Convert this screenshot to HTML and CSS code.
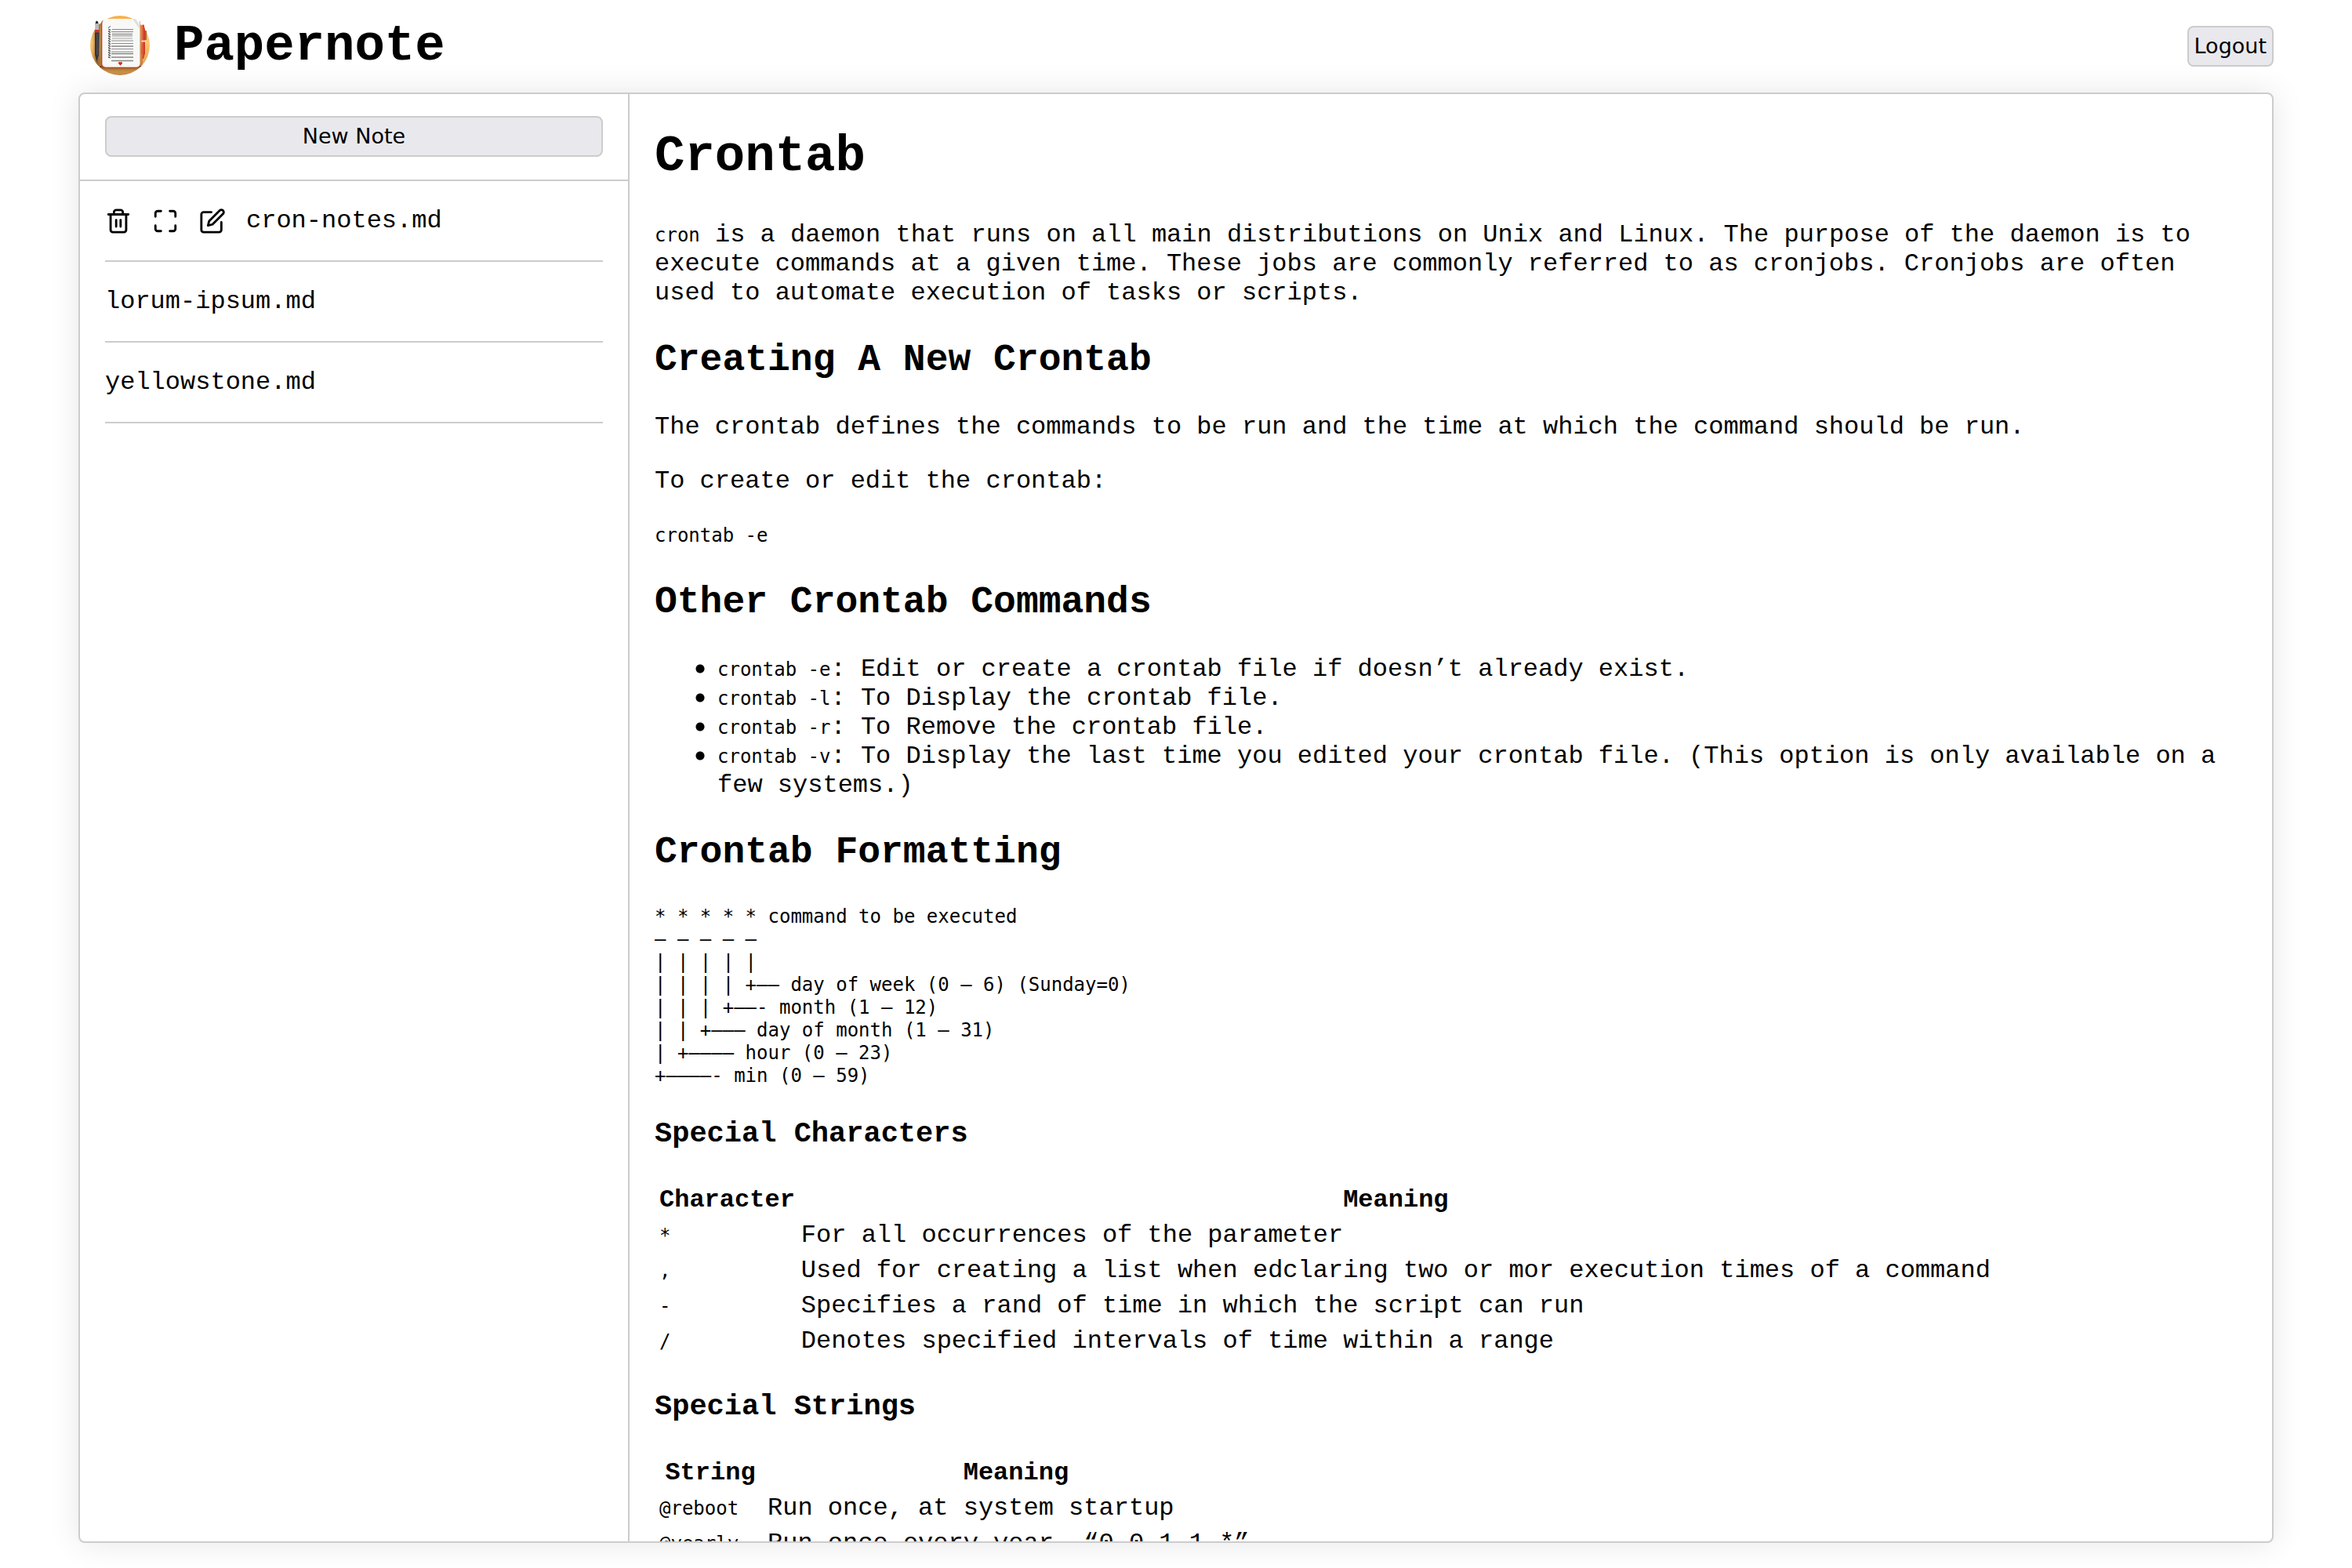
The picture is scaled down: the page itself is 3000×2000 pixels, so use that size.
FILE: index.html
```html
<!DOCTYPE html>
<html lang="en">
<head>
<meta charset="utf-8">
<meta name="viewport" content="width=device-width, initial-scale=1">
<title>Papernote</title>
<link rel="stylesheet" href="styles.css">
</head>
<body>
<header class="topbar">
  <svg class="logo" viewBox="0 0 76 76" aria-hidden="true">
    <defs>
      <linearGradient id="desk" x1="0" y1="0" x2="0" y2="1">
        <stop offset="0" stop-color="#f7b04a"/>
        <stop offset="0.45" stop-color="#fbc673"/>
        <stop offset="0.85" stop-color="#e2a24c"/>
        <stop offset="1" stop-color="#c08a45"/>
      </linearGradient>
      <linearGradient id="shade" x1="0" y1="0" x2="1" y2="0">
        <stop offset="0" stop-color="#8a5a2a" stop-opacity="0"/>
        <stop offset="0.5" stop-color="#6b4020" stop-opacity="0.7"/>
        <stop offset="1" stop-color="#6b4020" stop-opacity="0.3"/>
      </linearGradient>
      <linearGradient id="under" x1="0" y1="0" x2="0" y2="1">
        <stop offset="0" stop-color="#6b3d18"/>
        <stop offset="1" stop-color="#9a6a30" stop-opacity="0"/>
      </linearGradient>
      <linearGradient id="curl" x1="0" y1="1" x2="1" y2="0">
        <stop offset="0.4" stop-color="#fff"/>
        <stop offset="0.6" stop-color="#d8d8d8"/>
        <stop offset="0.8" stop-color="#fff"/>
      </linearGradient>
      <clipPath id="disc"><circle cx="38" cy="38" r="38"/></clipPath>
    </defs>
    <g clip-path="url(#disc)">
      <rect width="76" height="76" fill="url(#desk)"/>
      <rect x="2" y="10" width="14" height="54" fill="url(#shade)"/>
      <rect x="63" y="12" width="4" height="54" fill="#b4702f" opacity="0.6"/>
      <rect x="12" y="64" width="55" height="8" fill="url(#under)"/>
    </g>
    <rect x="14" y="5" width="50" height="62" rx="5" fill="#b8432f"/>
    <rect x="15" y="5" width="49" height="61" rx="5" fill="#e9b5a8"/>
    <rect x="16" y="4" width="47" height="61" rx="4" fill="#f8f8f7"/>
    <path d="M54 4h8l1 13-6-4z" fill="url(#curl)"/>
    <path d="M8 6.500l2 1 .8 4H6.500l.6-4z" fill="#2d2d33"/>
    <path d="M6.500 10h4.500v9h-5z" fill="#b9bac2"/>
    <path d="M6 18h5.500v3.500H6z" fill="#d5301f"/>
    <path d="M6 21.500h5.500L11 50l-2.500 9L6 50z" fill="#34343c"/>
    <path d="M9 23v27" stroke="#62636d" stroke-width="1"/>
    <path d="M66.500 11.500h2L70 18v30l-2 7h-1l-1.500-7z" fill="#cf3a20"/>
    <path d="M67 14v38" stroke="#f07b55" stroke-width="1"/>
    <path d="M65.500 32.500h5.500" stroke="#f5e3d8" stroke-width="2"/>
    <path d="M71 19v12" stroke="#8a4a24" stroke-width="1.500"/>
    <rect x="28" y="22" width="26" height="5" fill="#c9c9c9"/>
    <path d="M28 17.500h27M27 20.500h28M27 32h28M27 35.500h28M27 42.500h28M27 46h28" stroke="#8b8b8b" stroke-width="1"/>
    <path d="M28 24h26M28 29h26" stroke="#a5a5a5" stroke-width="1"/>
    <path d="M27 39h28M27 48.500h28M27 53h28M27 57.500h28" stroke="#858886" stroke-width="1.500"/>
    <path d="M23 15.500l3-2M23 17l3 1-3 2 3 1-3 2 3 1-3 2 3 1-3 2 3 1-3 2 3 1-3 2 3 1-3 2 3 1-3 2 3 1-3 2 3 1-3 2 3 1-3 2 3 1-3 2 3 1" fill="none" stroke="#555" stroke-width="1"/>
    <path d="M38.500 63.500l-2.500-2.500a1.500 1.500 0 0 1 2.500-1.500 1.500 1.500 0 0 1 2.500 1.500z" fill="#d42a12"/>
  </svg>
  <h1 class="brand">Papernote</h1>
  <button class="btn logout" type="button">Logout</button>
</header>

<div class="panel">
  <nav class="sidebar" aria-label="Notes">
    <div class="actions">
      <button class="btn new-note" type="button">New Note</button>
    </div>
    <ul class="notes">
      <li class="note">
        <button class="tool" type="button" aria-label="Delete">
          <svg class="icon" viewBox="0 0 24 24"><path d="M3 6h18M19 6v14a2 2 0 0 1-2 2H7a2 2 0 0 1-2-2V6m3 0V4a2 2 0 0 1 2-2h4a2 2 0 0 1 2 2v2M10 11v6M14 11v6"/></svg>
        </button>
        <button class="tool" type="button" aria-label="Full screen">
          <svg class="icon" viewBox="0 0 24 24"><path d="M8 3H5a2 2 0 0 0-2 2v3m18 0V5a2 2 0 0 0-2-2h-3m0 18h3a2 2 0 0 0 2-2v-3M3 16v3a2 2 0 0 0 2 2h3"/></svg>
        </button>
        <button class="tool" type="button" aria-label="Edit">
          <svg class="icon" viewBox="0 0 24 24"><path d="M11 4H4a2 2 0 0 0-2 2v14a2 2 0 0 0 2 2h14a2 2 0 0 0 2-2v-7"/><path d="M18.500 2.500a2.121 2.121 0 0 1 3 3L12 15l-4 1 1-4 9.500-9.500z"/></svg>
        </button>
        <a class="note-link" href="#cron-notes">cron-notes.md</a>
      </li>
      <li class="note"><a class="note-link" href="#lorum-ipsum">lorum-ipsum.md</a></li>
      <li class="note"><a class="note-link" href="#yellowstone">yellowstone.md</a></li>
    </ul>
  </nav>

  <main class="document">
    <h1>Crontab</h1>
    <p><code>cron</code> is a daemon that runs on all main distributions on Unix and Linux. The purpose of the daemon is to execute commands at a given time. These jobs are commonly referred to as cronjobs. Cronjobs are often used to automate execution of tasks or scripts.</p>
    <h2>Creating A New Crontab</h2>
    <p>The crontab defines the commands to be run and the time at which the command should be run.</p>
    <p>To create or edit the crontab:</p>
    <p><code>crontab -e</code></p>
    <h2>Other Crontab Commands</h2>
    <ul>
      <li><code>crontab -e</code>: Edit or create a crontab file if doesn’t already exist.</li>
      <li><code>crontab -l</code>: To Display the crontab file.</li>
      <li><code>crontab -r</code>: To Remove the crontab file.</li>
      <li><code>crontab -v</code>: To Display the last time you edited your crontab file. (This option is only available on a few systems.)</li>
    </ul>
    <h2>Crontab Formatting</h2>
<pre><code>* * * * * command to be executed
— — — — —
| | | | |
| | | | +—— day of week (0 — 6) (Sunday=0)
| | | +——- month (1 — 12)
| | +——— day of month (1 — 31)
| +———— hour (0 — 23)
+————- min (0 — 59)
</code></pre>
    <h3>Special Characters</h3>
    <table>
      <thead><tr><th>Character</th><th>Meaning</th></tr></thead>
      <tbody>
        <tr><td><code>*</code></td><td>For all occurrences of the parameter</td></tr>
        <tr><td><code>,</code></td><td>Used for creating a list when edclaring two or mor execution times of a command</td></tr>
        <tr><td><code>-</code></td><td>Specifies a rand of time in which the script can run</td></tr>
        <tr><td><code>/</code></td><td>Denotes specified intervals of time within a range</td></tr>
      </tbody>
    </table>
    <h3>Special Strings</h3>
    <table>
      <thead><tr><th>String</th><th>Meaning</th></tr></thead>
      <tbody>
        <tr><td><code>@reboot</code></td><td>Run once, at system startup</td></tr>
        <tr><td><code>@yearly</code></td><td>Run once every year, “0 0 1 1 *”</td></tr>
        <tr><td><code>@annually</code></td><td>(same as @yearly)</td></tr>
        <tr><td><code>@monthly</code></td><td>Run once every month, “0 0 1 * *”</td></tr>
      </tbody>
    </table>
  </main>
</div>
</body>
</html>
```
FILE: styles.css
```css
body {
  display: flex;
  flex-direction: column;
  box-sizing: border-box;
  height: 100vh;
  margin: 0;
  padding: 0 100px 32px;
  background: #fff;
  color: #000;
  font-family: "Liberation Mono", "Courier New", monospace;
  font-size: 32px;
}

.topbar {
  display: flex;
  flex: none;
  align-items: center;
  height: 118px;
}

.logo {
  width: 76px;
  height: 76px;
  margin: 0 0 2px 15px;
}

.brand {
  margin: 0 auto 0 31px;
  font-size: 64px;
  font-weight: bold;
}

.btn {
  box-sizing: border-box;
  height: 52px;
  padding: 0 7px 2px;
  border: 2px solid #ccc;
  border-radius: 8px;
  background: #e9e9ed;
  color: #000;
  font-family: "DejaVu Sans", sans-serif;
  font-size: 27px;
}

.panel {
  display: flex;
  flex: 1;
  min-height: 0;
  border: 2px solid #ccc;
  border-radius: 8px;
  background: #fff;
  box-shadow: 0 0 40px rgba(0, 0, 0, 0.1);
}

.sidebar {
  flex: 0 0 25%;
  border-right: 2px solid #ccc;
}

.actions {
  padding: 28px 32px 29px;
  border-bottom: 2px solid #ccc;
}

.new-note {
  display: block;
  width: 100%;
}

.notes {
  margin: 0;
  padding: 0 32px;
  list-style: none;
}

.note {
  display: flex;
  align-items: center;
  gap: 26px;
  padding: 32px 0;
  border-bottom: 2px solid #ccc;
}

.note-link {
  color: inherit;
  text-decoration: none;
}

.tool {
  flex: none;
  padding: 0;
  border: 0;
  background: none;
  color: inherit;
}

.icon {
  display: block;
  width: 34px;
  height: 34px;
  fill: none;
  stroke: currentColor;
  stroke-width: 2;
  stroke-linecap: round;
  stroke-linejoin: round;
}

.document {
  flex: 1;
  min-width: 0;
  padding: 0 32px;
  overflow-y: auto;
  scrollbar-width: none;
}

.document h1 {
  margin: 43px 0;
  font-size: 64px;
  line-height: 75px;
}

.document h2 {
  margin: 40px 0;
  font-size: 48px;
}

.document h3 {
  margin: 37px 0 38px;
  font-size: 37px;
  line-height: 44px;
}

.document p,
.document ul {
  margin: 32px 0;
}

.document ul {
  padding-left: 52px;
  list-style: none;
}

.document li {
  padding-left: 28px;
  background: radial-gradient(circle at 6px 18px, #000 5px, transparent 6px) no-repeat;
}

.document code {
  font-family: "DejaVu Sans Mono", monospace;
  font-size: 24px;
}

.document pre {
  margin: 41px 0 32px;
  font-size: 24px;
  line-height: 29px;
}

.document table {
  border-spacing: 4px;
}

.document th,
.document td {
  padding: 2px;
}
```
